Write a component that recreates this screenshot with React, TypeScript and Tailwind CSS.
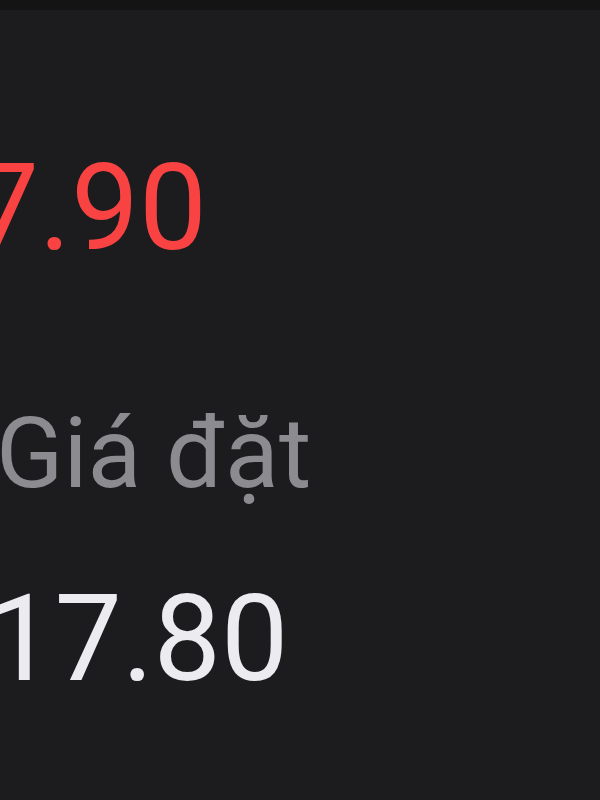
import React from 'react';

export default function App() {
  return (
    <div className="w-[600px] h-[800px] bg-[#1c1c1e] overflow-hidden" style={{fontFamily: 'Roboto, "Noto Sans", sans-serif'}}>
      <div className="h-[10px] bg-[#141414]" />
      <div className="flex flex-col">
        <span className="mt-[138px] ml-[-97px] text-[121px] leading-none text-[#f94343] whitespace-nowrap">17.90</span>
        <span className="mt-[135px] ml-[-4px] text-[99px] leading-none text-[#8c8c90] whitespace-nowrap">Giá đặt</span>
        <span className="mt-[76px] ml-[-13px] text-[120px] leading-none text-[#ececf0] whitespace-nowrap">17.80</span>
      </div>
    </div>
  );
}
